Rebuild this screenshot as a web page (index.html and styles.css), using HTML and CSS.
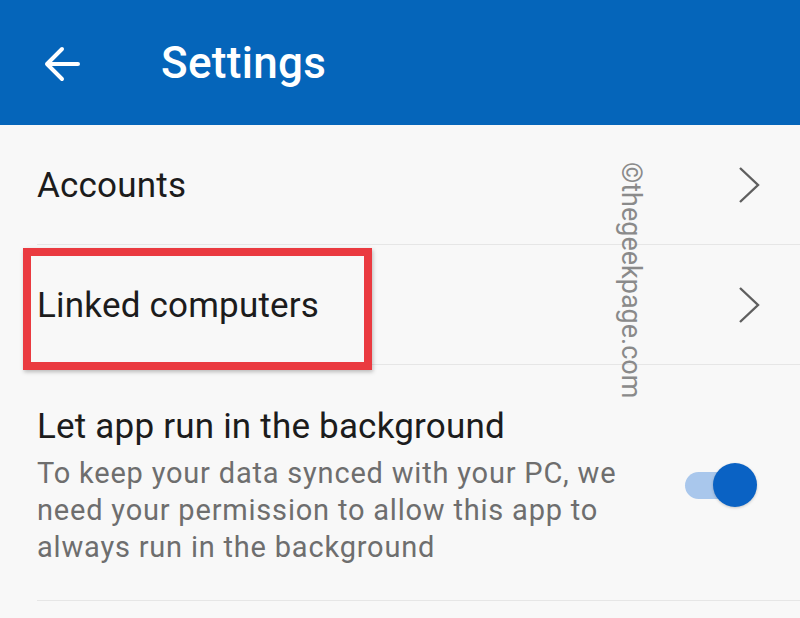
FILE: index.html
```html
<!DOCTYPE html>
<html lang="en">
<head>
<meta charset="UTF-8">
<meta name="viewport" content="width=device-width, initial-scale=1.0">
<title>Settings</title>
<link rel="stylesheet" href="styles.css">
</head>
<body>
<div class="app">
    <div class="topbar">
        <svg class="back" width="40" height="40" viewBox="0 0 40 40">
            <path d="M36 20H5M20 5L5 20l15 15" fill="none" stroke="#fff" stroke-width="4" stroke-linecap="round" stroke-linejoin="round"/>
        </svg>
        <h1 class="title">Settings</h1>
    </div>
    <div class="list">
        <div class="row">
            <span class="row-label">Accounts</span>
            <svg class="chevron" width="22" height="38" viewBox="0 0 22 38">
                <path d="M2 2l18 17L2 36" fill="none" stroke="#5f5f5f" stroke-width="2.4"/>
            </svg>
        </div>
        <div class="row">
            <span class="row-label">Linked computers</span>
            <svg class="chevron" width="22" height="38" viewBox="0 0 22 38">
                <path d="M2 2l18 17L2 36" fill="none" stroke="#5f5f5f" stroke-width="2.4"/>
            </svg>
        </div>
        <div class="row row-tall">
            <div class="row-text">
                <div class="row-label">Let app run in the background</div>
                <div class="row-desc">To keep your data synced with your PC, we need your permission to allow this app to always run in the background</div>
            </div>
            <div class="toggle on"><span class="knob"></span></div>
        </div>
    </div>
    <div class="highlight"></div>
    <div class="watermark">&copy;thegeekpage.com</div>
</div>
</body>
</html>
```

FILE: styles.css
```css
body {
    margin: 0;
    font-family: Roboto, "Noto Sans", Arial, sans-serif;
    background-color: #f8f8f8;
}
.app {
    position: relative;
    width: 800px;
    height: 618px;
    overflow: hidden;
}
.topbar {
    height: 125px;
    background-color: #0565ba;
    display: flex;
    align-items: center;
    padding-left: 42px;
    box-sizing: border-box;
}
.back {
    margin-top: 2px;
}
.title {
    margin: 0 0 0 79px;
    color: #fff;
    font-size: 44px;
    font-weight: 500;
    letter-spacing: 0.3px;
}
.list {
    padding-left: 37px;
}
.row {
    display: flex;
    align-items: center;
    justify-content: space-between;
    height: 120px;
    padding: 2px 40px 0 0;
    box-sizing: border-box;
    border-bottom: 1px solid #e6e6e6;
}
.row-label {
    font-size: 35px;
    line-height: 40px;
    letter-spacing: 0.2px;
    color: #1c1c1c;
}
.chevron {
    margin-top: -2px;
}
.row-tall {
    height: auto;
    padding: 42px 43px 34px 0;
}
.row-text {
    width: 610px;
}
.row-desc {
    margin-top: 8px;
    font-size: 29px;
    line-height: 37px;
    letter-spacing: 0.8px;
    color: #6e6e6e;
}
.toggle {
    position: relative;
    width: 72px;
    height: 44px;
    margin-top: -4px;
}
.toggle::before {
    content: "";
    position: absolute;
    left: 0;
    top: 9px;
    width: 60px;
    height: 27px;
    border-radius: 14px;
    background-color: #a9c7ec;
}
.knob {
    position: absolute;
    right: 0;
    top: 0;
    width: 44px;
    height: 44px;
    border-radius: 50%;
    background-color: #0a62c4;
    box-shadow: 0 1px 3px rgba(0, 0, 0, 0.2);
}
.highlight {
    position: absolute;
    left: 23px;
    top: 248px;
    width: 349px;
    height: 122px;
    box-sizing: border-box;
    border: 8px solid #ea3a40;
    box-shadow: 1px 2px 4px rgba(0, 0, 0, 0.25);
}
.watermark {
    position: absolute;
    left: 631px;
    top: 162px;
    transform-origin: 0 0;
    transform: rotate(90deg) translateY(-50%);
    font-size: 27px;
    color: #8a8a8a;
    white-space: nowrap;
}
```
